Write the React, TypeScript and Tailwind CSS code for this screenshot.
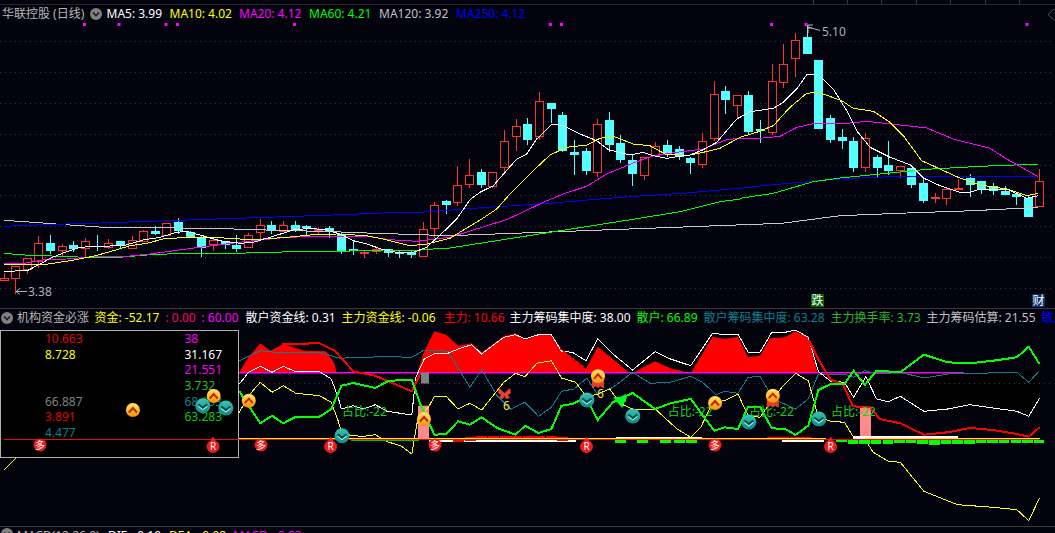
import React from "react";

type P = [number, number];
const parse = (s: string, ox: number, oy: number, sx = 3, sy = 3): P[] =>
  s.trim().split(/\s+/).map((t) => {
    const [x, y] = t.split(",").map(Number);
    return [ox + x / sx, oy + y / sy] as P;
  });
const z2 = (s: string) => parse(s, 0, 200);
const z5 = (s: string) => parse(s, 420, 20);
const z6 = (s: string) => parse(s, 740, 15);
const z3 = (s: string) => parse(s, 0, 305, 2.958, 3);
const z4 = (s: string) => parse(s, 525, 305, 2.958, 3);
const str = (p: P[]) => p.map(([x, y]) => `${x.toFixed(1)},${y.toFixed(1)}`).join(" ");

// index, kind (r red / c cyan), high, top, bottom, low
const candles: [number, string, number, number, number, number][] = [
  [0,"r",274,279,281,281],[1,"r",267,267,279,295],[2,"r",259,259,270,275],[3,"r",237,244,262,269],[4,"c",236,244,252,255],
  [5,"r",245,247,251,257],[6,"c",242,246,250,253],[7,"r",239,242,249,258],[8,"c",236,247,248,252],[9,"r",240,244,248,250],
  [10,"c",242,242,247,250],[11,"r",237,241,249,250],[12,"r",231,232,242,242],[13,"c",227,232,235,236],[14,"r",224,224,236,236],
  [15,"c",219,223,232,235],[16,"c",232,233,238,239],[17,"c",236,238,249,258],[18,"r",240,241,245,252],[19,"c",242,242,246,250],
  [20,"c",236,246,250,253],[21,"r",234,236,248,249],[22,"r",220,226,233,240],[23,"c",222,226,231,235],[24,"r",222,226,232,233],
  [25,"c",222,226,231,233],[26,"c",226,227,229,236],[27,"r",228,230,231,236],[28,"c",227,229,233,239],[29,"c",233,236,252,255],
  [30,"c",241,250,252,256],[31,"r",252,253,254,259],[32,"r",248,250,252,255],[33,"c",250,250,254,258],[34,"c",252,253,255,259],
  [35,"c",252,253,256,259],[36,"r",223,230,257,258],[37,"r",203,206,229,239],[38,"c",201,202,206,215],[39,"r",167,186,203,207],
  [40,"r",160,176,185,189],[41,"c",170,173,186,189],[42,"r",173,173,187,189],[43,"r",131,142,168,173],[44,"r",120,127,137,152],
  [45,"c",119,125,141,146],[46,"r",93,102,137,141],[47,"c",104,104,110,124],[48,"c",113,116,152,153],[49,"c",141,153,156,176],
  [50,"c",149,152,172,176],[51,"r",120,125,173,178],[52,"c",113,121,146,153],[53,"c",136,144,161,164],[54,"c",155,161,175,187],
  [55,"r",158,158,176,181],[56,"r",143,147,156,158],[57,"c",141,146,156,158],[58,"c",147,150,158,161],[59,"c",158,159,164,175],
  [60,"r",134,142,165,169],[61,"r",82,95,139,142],[62,"c",87,92,101,115],[63,"r",96,96,106,119],[64,"c",92,96,133,136],
  [65,"c",121,130,132,144],[66,"r",65,82,133,136],[67,"r",45,65,83,89],[68,"r",34,41,59,78],[69,"c",26,38,55,55],
  [70,"c",61,61,130,130],[71,"c",116,119,141,144],[72,"c",130,138,142,150],[73,"c",138,142,169,173],[74,"r",134,139,168,173],
  [75,"c",156,158,169,178],[76,"c",142,166,172,176],[77,"r",167,167,171,179],[78,"c",169,169,186,189],[79,"c",179,184,202,204],
  [80,"r",194,198,199,204],[81,"r",188,190,199,206],[82,"r",180,189,190,191],[83,"c",175,179,186,198],[84,"c",182,182,191,195],
  [85,"c",184,187,192,196],[86,"c",187,192,196,196],[87,"c",194,195,198,206],[88,"c",197,199,218,218],[89,"r",170,182,207,207],
];
const cx = (i: number) => Math.round(3.5 + 11.64 * i);

const lines: [string, P[]][] = [
  ["#c8c8c8", [...z2("12,64 100,70 210,78 310,85 640,88 760,92 1000,98 1100,102 1350,110"), ...z6("125,628 300,605 500,597 700,590 895,580")]],
  ["#0000ff", [...z2("12,82 130,77 300,72 500,65 800,55 1000,48 1200,40"), ...z5("0,580 160,568 400,552 600,535 800,522 960,507"), ...z6("0,523 100,512 300,495 450,488 895,487")]],
  ["#00ff00", [...z2("12,163 60,167 110,170 200,172 280,177 370,174 440,168 520,164 700,163 830,160 900,156 1050,156 1150,153 1240,155 1300,150 1350,147"), ...z5("645,600 780,578 900,548 960,540"), ...z6("0,553 100,538 220,503 300,492 420,480 560,466 700,458 790,454 895,451")]],
  ["#ff00ff", [...z2("12,193 60,195 130,183 200,180 280,173 380,172 450,165 560,150 660,137 760,125 860,115 960,112 1100,112 1170,122 1250,127 1350,115"), ...z5("265,600 370,550 430,525 500,502 560,465 640,432 700,410 770,400 850,390 920,362 960,358"), ...z6("0,373 70,372 120,367 170,340 230,327 330,327 380,322 480,333 560,342 640,375 750,403 800,435 895,488")]],
  ["#ffff00", [...z2("12,197 60,198 130,197 210,185 280,172 340,155 390,140 440,133 490,120 560,115 640,115 720,120 760,122 860,115 930,108 1010,105 1100,110 1150,120 1230,140 1280,135 1350,118"), ...z5("185,600 230,570 270,525 340,455 390,408 440,385 500,378 540,358 580,352 640,375 690,380 735,405 800,410 850,400 900,388 960,355"), ...z6("0,370 50,355 100,335 150,280 200,238 235,235 305,260 340,283 400,292 450,325 490,365 545,440 600,465 650,488 720,513 800,525 860,545 895,538")]],
  ["#ffffff", [...z2("12,217 82,215 130,190 150,178 200,158 240,145 290,142 370,140 430,123 480,115 530,100 560,97 600,108 660,125 720,133 760,130 820,112 880,93 930,88 980,93 1020,105 1060,125 1100,135 1150,152 1190,160 1240,160 1280,145 1350,80"), ...z5("110,600 150,542 180,520 220,500 290,420 320,405 350,360 395,316 430,320 480,345 530,365 565,392 630,408 670,400 700,410 740,418 780,412 810,408 850,392 890,370 950,300"), ...z6("0,310 30,293 100,283 130,265 170,225 200,182 235,181 280,225 320,290 350,350 390,400 450,430 510,452 550,492 600,515 660,535 690,535 720,525 800,525 860,553 895,545")]],
];

const gridY = [42, 73, 104, 135, 166, 196, 227, 258, 289];
const dots = [84.5, 119, 166, 177.5, 294.5, 550.4, 561.5, 771.5, 806, 1027];
const ticks = [812.5, 846.5, 881, 915.5, 950, 985, 1019];

const whiteLine = [...z3("708,240 735,205 770,187 805,205 838,187 875,203 945,203 980,225 1000,280 1010,315 1045,305 1075,315 1110,302 1145,322 1218,333 1230,220 1255,165 1285,150 1325,148 1355,135 1395,122 1425,150 1490,100 1525,92"), ...z4("0,105 40,92 78,92 108,142 140,145 180,170 215,105 260,150 318,198 385,143 430,165 490,185 555,88 590,92 630,90 660,145 695,145 730,85 770,85 800,78 838,100 868,203 905,232 945,235 972,280 1008,218 1040,285 1075,293 1110,277 1180,322 1250,315 1315,302 1385,312 1455,322 1490,337 1522,283")];
const yellowLine = [...z3("12,497 48,462"), ...z3("708,325 735,275 770,235 805,265 838,245 875,268 945,275 980,295 1000,350 1010,385 1040,395 1075,397 1110,392 1145,413 1185,425 1218,450 1235,350 1270,305 1285,277 1320,277 1355,315 1390,298 1425,318 1490,235 1525,208"), ...z4("0,218 35,178 78,170 108,222 150,235 183,280 215,270 250,255 285,300 318,315 385,315 450,375 490,400 520,370 555,295 590,290 630,270 660,335 695,340 730,290 760,250 800,208 838,230 868,340 905,352 945,355 972,400 1005,405 1030,445 1075,472 1110,475 1180,562 1250,590 1280,602 1385,610 1455,617 1490,650 1522,582")];
const greenLine = [...z3("708,262 735,305 770,358 805,335 838,358 875,338 945,338 980,315 1010,245 1045,237 1110,252 1150,230 1218,228 1245,305 1285,392 1320,390 1355,352 1390,362 1425,340 1470,372 1525,392"), ...z4("0,365 40,387 78,375 108,305 140,300 180,280 215,348 260,295 318,267 385,315 430,298 490,285 560,380 590,370 630,375 660,308 695,308 730,373 770,375 800,393 838,365 868,258 905,240 945,240 972,200 1005,243 1040,200 1110,205 1180,152 1250,175 1315,178 1385,170 1455,160 1490,128 1522,180")];
const tealLine = [...z3("708,170 770,140 838,147 945,145 1005,163 1060,160 1150,158 1218,160 1255,138 1325,142 1390,250 1425,197 1470,275 1510,315"), ...z4("0,295 40,337 78,310 108,262 145,255 183,222 215,272 260,250 318,205 370,238 430,235 490,217 525,235 565,272 590,262 630,268 660,220 695,217 735,285 800,315 838,285 868,210 945,210 972,220 1005,200 1040,210 1110,205 1180,222 1250,210 1455,205 1490,235 1522,200")];
const redA = z3("835,120 945,118 990,140 1045,202 1110,215 1218,262 1245,205");
const redB = z4("840,110 870,170 905,228 940,240 970,307 1020,310 1050,345 1110,358 1180,392 1250,385 1315,372 1385,378 1455,390 1490,398 1522,370");
const redC = z4("105,135 175,190");
const area1 = z3("708,205 735,160 770,118 800,140 838,120 900,140 965,142 990,180 995,205");
const area2 = [...z3("1235,205 1255,140 1285,82 1320,92 1355,125 1395,118 1425,145 1490,97 1525,88"), ...z4("0,108 40,92 78,94 108,135 140,165 180,195 215,128 260,165 315,212 340,195 385,172 430,193 490,208 555,98 590,105 630,98 660,160 695,155 725,103 770,100 800,82 838,100 865,205")];

const gold = [[132.9, 411], [213.7, 397], [248.8, 401.7], [424, 420], [715, 404]];
const teal = [[202.8, 406.7], [225.8, 409], [342, 436.7], [586.9, 401], [632.8, 417], [748.8, 423], [818.8, 420]];
const medals = [[598, 378.3], [772.8, 397.7]];
const duo = [40, 261, 435, 715];
const rr = [213, 330.6, 586.5, 830.6];
const share = [342, 667.7, 749, 831];

type H = { w: string; c: string; t: string };
const subHead: H[] = [
  { w: "w-[71px]", c: "#ffff00", t: "资金: -52.17" },
  { w: "w-[36px]", c: "#ff0066", t: ": 0.00" },
  { w: "w-[44px]", c: "#ff00ff", t: ": 60.00" },
  { w: "w-[96px]", c: "#ffffff", t: "散户资金线: 0.31" },
  { w: "w-[102px]", c: "#ffff00", t: "主力资金线: -0.06" },
  { w: "w-[66px]", c: "#ff0000", t: "主力: 10.66" },
  { w: "w-[127px]", c: "#ffffff", t: "主力筹码集中度: 38.00" },
  { w: "w-[67px]", c: "#00ff00", t: "散户: 66.89" },
  { w: "w-[127px]", c: "#0e7f8e", t: "散户筹码集中度: 63.28" },
  { w: "w-[96px]", c: "#2fb52f", t: "主力换手率: 3.73" },
  { w: "w-[115px]", c: "#c0c0c0", t: "主力筹码估算: 21.55" },
  { w: "w-[60px]", c: "#0000ff", t: "散户: 66.89" },
];

function Chevron() {
  return (
    <span className="flex h-[12px] w-[12px] shrink-0 items-center justify-center rounded-full bg-[#808080]">
      <svg width="8" height="6" viewBox="0 0 8 6"><path d="M1 1.5 L4 4.5 L7 1.5" fill="none" stroke="#1c1c1c" strokeWidth="1.6" /></svg>
    </span>
  );
}

function Coin({ x, y, kind }: { x: number; y: number; kind: "gold" | "teal" }) {
  if (kind === "gold")
    return (
      <g>
        <circle cx={x} cy={y} r={7} fill="url(#goldG)" />
        <path d={`M${x - 4} ${y + 2.5} L${x} ${y - 2} L${x + 4} ${y + 2.5}`} fill="none" stroke="#c81e10" strokeWidth={2} />
      </g>
    );
  return (
    <g>
      <circle cx={x} cy={y} r={7.5} fill="url(#tealG)" />
      <path d={`M${x - 4.5} ${y - 1.5} L${x} ${y + 2} L${x + 4.5} ${y - 1.5}`} fill="none" stroke="#0d4a4a" strokeWidth={2} />
      <path d={`M${x - 4.5} ${y + 0.5} L${x} ${y + 4} L${x + 4.5} ${y + 0.5}`} fill="none" stroke="#d8fff6" strokeWidth={1} />
    </g>
  );
}

function Medal({ x, y }: { x: number; y: number }) {
  return (
    <g>
      <path d={`M${x - 6} ${y + 3} L${x - 6} ${y + 11} L${x - 2} ${y + 9} L${x} ${y + 11} L${x + 2} ${y + 9} L${x + 6} ${y + 11} L${x + 6} ${y + 3} Z`} fill="#e0402a" />
      <Coin x={x} y={y - 1} kind="gold" />
    </g>
  );
}

function RedDot({ x, y, label, peak }: { x: number; y: number; label: string; peak?: boolean }) {
  return (
    <g>
      {peak && <path d={`M${x - 3} ${y - 5} L${x} ${y - 10} L${x + 3} ${y - 5} Z`} fill="#ff2020" />}
      <circle cx={x} cy={y} r={6.5} fill="#f01818" />
      <text x={x} y={y + 3.5} textAnchor="middle" fontSize="10" fill="#ffffff">{label}</text>
    </g>
  );
}

export default function App() {
  const font = "font-['Noto_Sans','Noto_Sans_CJK_SC',sans-serif]";
  return (
    <div className={`flex h-[533px] w-[1055px] flex-col overflow-hidden bg-[#03030e] text-[12px] leading-[16px] ${font}`}>
      {/* top ruler */}
      <div className="relative h-[5px] shrink-0 border-b border-[#26262c]">
        {ticks.map((t) => (
          <span key={t} className="absolute top-0 h-[4px] w-px bg-[#3a3a3a]" style={{ left: t }} />
        ))}
      </div>

      {/* main header */}
      <div className="relative flex h-[18px] shrink-0 items-center whitespace-nowrap pl-[2px] pb-[1px]">
        <span className="w-[88px] shrink-0 text-[#b8b8b8]">华联控股 (日线)</span>
        <span className="w-[16.5px] shrink-0"><Chevron /></span>
        <span className="w-[63px] shrink-0 text-white">MA5: 3.99</span>
        <span className="w-[69.5px] shrink-0 text-[#ffff00]">MA10: 4.02</span>
        <span className="w-[70px] shrink-0 text-[#ff00ff]">MA20: 4.12</span>
        <span className="w-[70px] shrink-0 text-[#00ff00]">MA60: 4.21</span>
        <span className="w-[77px] shrink-0 text-[#c0c0c0]">MA120: 3.92</span>
        <span className="shrink-0 text-[#0000ff]">MA250: 4.12</span>
        <svg className="absolute right-0 top-[3px]" width="8" height="13" viewBox="0 0 8 13">
          <path d="M7 1 L1 6.5 L7 12" fill="none" stroke="#555" strokeWidth="1" />
        </svg>
      </div>

      {/* candlestick chart */}
      <div className="relative h-[285px] shrink-0">
        <svg className={`block ${font}`} width="1055" height="285" viewBox="0 24 1055 285">
          {gridY.map((y) => (
            <line key={y} x1="0" x2="1055" y1={y + 0.5} y2={y + 0.5} stroke="#3a3a3a" strokeDasharray="1 4" />
          ))}
          {dots.map((x) => (
            <rect key={x} x={x - 1.5} y={24} width="3" height="3" fill="#ff00ff" />
          ))}
          <g shapeRendering="crispEdges">
            {candles.map(([i, k, hi, top, bot, lo]) => {
              const x = cx(i);
              const c = k === "r" ? "#ff3232" : "#54ffff";
              return (
                <g key={i}>
                  <line x1={x + 0.5} x2={x + 0.5} y1={hi} y2={top} stroke={c} />
                  <line x1={x + 0.5} x2={x + 0.5} y1={bot} y2={lo} stroke={c} />
                  {k === "r" ? (
                    <rect x={x - 3.5} y={top + 0.5} width={8} height={bot - top} fill="#03030e" stroke={c} />
                  ) : (
                    <rect x={x - 4} y={top} width={9} height={Math.max(bot - top, 1)} fill={c} />
                  )}
                </g>
              );
            })}
            {lines.map(([c, p]) => (
              <polyline key={c} points={str(p)} fill="none" stroke={c} strokeWidth="1" />
            ))}
          </g>
          <path d="M27 292.5 L16 292.5 M20 289.5 L16 292.5 L20 295.5" fill="none" stroke="#b0b0b0" />
          <text x="28" y="296.5" fontSize="12" fill="#b0b0b0">3.38</text>
          <path d="M820 31.5 L808 28 M808 26 L808 34 M808 26 L813 26 M808 29 L812 29" fill="none" stroke="#b0b0b0" />
          <text x="822" y="36.5" fontSize="12" fill="#b0b0b0">5.10</text>
        </svg>
        <span className="absolute left-[811px] top-[271px] flex h-[13px] w-[13px] items-center justify-center bg-[#006400] text-white">跌</span>
        <span className="absolute left-[1032px] top-[271px] flex h-[13px] w-[13px] items-center justify-center bg-[#0a3470] text-white">财</span>
      </div>

      {/* sub panel header */}
      <div className="flex h-[22px] shrink-0 items-center whitespace-nowrap border-t border-[#3a3a3a] pb-[3px] pl-[1px]">
        <span className="w-[16px] shrink-0"><Chevron /></span>
        <span className="w-[77.5px] shrink-0 text-[#b8b8b8]">机构资金必涨</span>
        {subHead.map((h) => (
          <span key={h.t + h.c} className={`shrink-0 ${h.w}`} style={{ color: h.c }}>{h.t}</span>
        ))}
      </div>

      {/* sub chart */}
      <div className="relative h-[196px] shrink-0">
        <svg className="block" width="1055" height="196" viewBox="0 331 1055 196">
          <polygon points={str([[whiteLine[0][0], 373.3], ...whiteLine, [whiteLine[whiteLine.length - 1][0], 373.3]])} fill="#000000" />
          <polygon points={str(area1)} fill="#ff0000" />
          <polygon points={str(area2)} fill="#ff0000" />
          <rect x="239" y="373" width="725" height="1.5" fill="#ff00ff" />
          <line x1="239" x2="1055" y1="384.5" y2="384.5" stroke="#3a3a3a" strokeDasharray="1 4" />
          <rect x="418" y="406.7" width="11" height="33.5" fill="#ff8a8a" />
          <rect x="421" y="373.5" width="8" height="11" fill="#808080" />
          <rect x="860" y="407.7" width="11" height="32.5" fill="#ff8a8a" />
          <g shapeRendering="crispEdges">
            <polyline points={str(tealLine)} fill="none" stroke="#0e7f8e" strokeWidth="1" />
            <polyline points={str(whiteLine)} fill="none" stroke="#ffffff" strokeWidth="1" />
            <polyline points={str(yellowLine)} fill="none" stroke="#ffff00" strokeWidth="1" />
            <polyline points={str(redA)} fill="none" stroke="#ff0000" strokeWidth="2" />
            <polyline points={str(redB)} fill="none" stroke="#ff0000" strokeWidth="2" />
            <polyline points={str(redC)} fill="none" stroke="#ff0000" strokeWidth="1" />
            <polyline points={str(greenLine)} fill="none" stroke="#00ff00" strokeWidth="2" />
          </g>
          <g shapeRendering="crispEdges">
            <rect x="239" y="440" width="800" height="1" fill="#ff0000" />
            <rect x="429" y="441" width="147" height="2" fill="#ffffff" />
            <rect x="782" y="441" width="42" height="2" fill="#ffffff" />
            <rect x="616" y="438" width="86" height="2" fill="#ffffff" />
            <rect x="853" y="437" width="105" height="3" fill="#ffffff" />
            <rect x="351" y="439" width="48" height="1" fill="#ffffff" />
            {[453, 465, 476, 488, 500, 511, 523, 534, 546, 557].map((x, i) => (
              <rect key={x} x={x} y={[439, 438, 437, 437, 437, 437, 437, 437, 437, 438][i]} width="11" height={4} fill="#ff0000" />
            ))}
            {[767, 778, 790, 801].map((x) => (
              <rect key={x} x={x} y="437.5" width="11" height="3" fill="#ff0000" />
            ))}
            {[615, 637, 660, 674, 686].map((x) => (
              <rect key={x} x={x} y="441" width="11" height="2.5" fill="#00ff00" />
            ))}
            {Array.from({ length: 18 }, (_, i) => 836 + i * 11.64).map((x, i) => (
              <rect key={x} x={x} y="441" width="10.5" height={[2, 4, 4, 4, 4, 3, 3, 4, 5, 4, 4, 4, 3, 3, 3, 3, 3, 3][i]} fill="#00ff00" />
            ))}
            <rect x="351" y="441" width="68" height="1" fill="#00c000" />
            <rect x="239" y="439" width="180" height="1" fill="#ffff00" />
            <rect x="429" y="439" width="397" height="1" fill="#ffff00" />
            <rect x="865" y="439" width="175" height="1" fill="#ffff00" />
          </g>
        </svg>

        {/* overlay table */}
        <div className="absolute left-0 top-[0px] h-[128px] w-[239px] overflow-hidden border border-[#b0b0b0] bg-black">
          <div className="grid auto-rows-[15.7px] grid-cols-[44px_139.5px_1fr]">
            {[
              ["10.663", "#e00000", "38", "#ff00ff"],
              ["8.728", "#ffff00", "31.167", "#ffffff"],
              ["", "", "21.551", "#ff00ff"],
              ["", "", "3.732", "#2fb52f"],
              ["66.887", "#808080", "68.933", "#0e7f8e"],
              ["3.891", "#e00000", "63.283", "#00d000"],
              ["4.477", "#0e7f8e", "", ""],
            ].map(([a, ac, b, bc], i) => (
              <React.Fragment key={i}>
                <span />
                <span style={{ color: ac }}>{a}</span>
                <span style={{ color: bc }}>{b}</span>
              </React.Fragment>
            ))}
          </div>
        </div>

        {/* markers above table */}
        <svg className={`absolute left-0 top-0 ${font}`} width="1055" height="196" viewBox="0 331 1055 196">
          <defs>
            <linearGradient id="goldG" x1="0" y1="0" x2="0" y2="1">
              <stop offset="0" stopColor="#ffe27a" />
              <stop offset="0.55" stopColor="#ffc020" />
              <stop offset="1" stopColor="#f58a10" />
            </linearGradient>
            <linearGradient id="tealG" x1="0" y1="0" x2="0" y2="1">
              <stop offset="0" stopColor="#34c8b4" />
              <stop offset="1" stopColor="#0e8a86" />
            </linearGradient>
          </defs>
          <rect x="4" y="440" width="235" height="1" fill="#e01010" shapeRendering="crispEdges" />
          {share.map((x) => (
            <text key={x} x={x} y="417" fontSize="12" fill="#10d818">占比:-22</text>
          ))}
          <text x="503" y="411" fontSize="12" fill="#ffe040">6</text>
          <text x="597" y="399" fontSize="12" fill="#ffe040">6</text>
          <path d="M504.5 394 L499 389 L498 394 L501 396 L499 399 L503 400 L504.5 397 L506 400 L510 399 L508 396 L511 394 L510 389 Z" fill="#e8402c" />
          <path d="M613 398 L627 398 L622 409 Z M618 399 L626 395 L626 403 Z" fill="#00ff20" />
          {gold.map(([x, y]) => <Coin key={x} x={x} y={y} kind="gold" />)}
          {teal.map(([x, y]) => <Coin key={x} x={x} y={y} kind="teal" />)}
          {medals.map(([x, y]) => <Medal key={x} x={x} y={y} />)}
          {duo.map((x) => <RedDot key={x} x={x} y={446} label="多" />)}
          {rr.map((x) => <RedDot key={x} x={x} y={447.5} label="R" peak />)}
        </svg>
      </div>

      {/* MACD header, cut off */}
      <div className="flex h-[6px] shrink-0 items-start overflow-visible whitespace-nowrap border-t border-[#3a3a3a] pl-[1px] pt-[1px]">
        <span className="w-[16px] shrink-0"><Chevron /></span>
        <span className="w-[91px] shrink-0 text-[#b8b8b8]">MACD(12,26,9)</span>
        <span className="w-[61px] shrink-0 text-white">DIF: -0.10</span>
        <span className="w-[64px] shrink-0 text-[#ffff00]">DEA: -0.08</span>
        <span className="shrink-0 text-[#ff00ff]">MACD: -0.03</span>
      </div>
    </div>
  );
}
